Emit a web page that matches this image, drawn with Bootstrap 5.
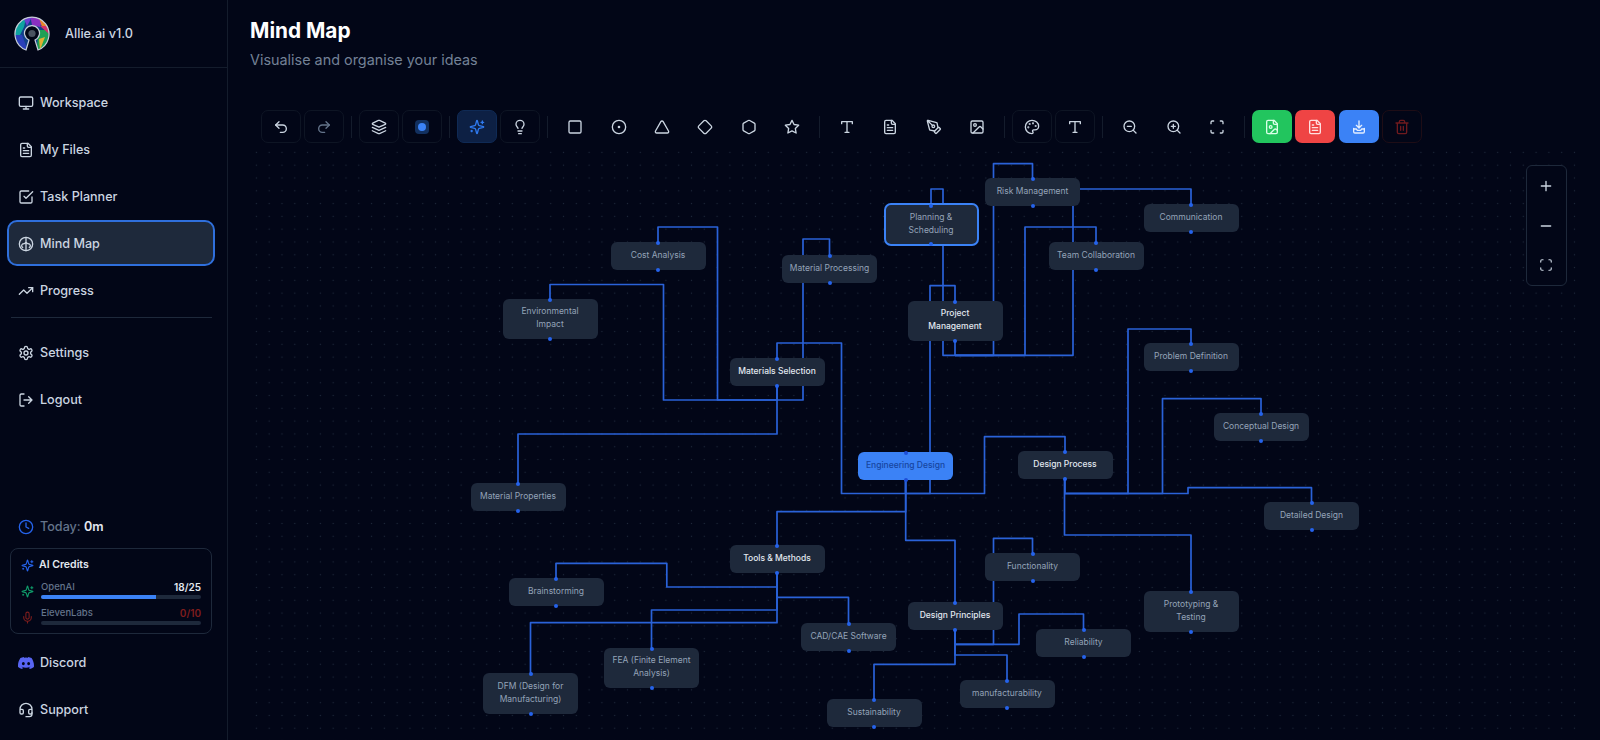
<!DOCTYPE html>
<html lang="en">
<head>
  <meta charset="UTF-8" /><meta name="viewport" content="width=device-width, initial-scale=1" />
  <title>Allie.ai - Mind Map</title>
  <link href="https://cdn.jsdelivr.net/npm/bootstrap@5.3.0/dist/css/bootstrap.min.css" rel="stylesheet" />
  <style>
    html, body { height: 740px; overflow: hidden; }
    body { font-family: Inter, "Liberation Sans", sans-serif; background: #020617; color: #cbd5e1; }
    .ico { width: 16px; height: 16px; fill: none; stroke: currentColor; stroke-width: 2; stroke-linecap: round; stroke-linejoin: round; flex: none; }
    .app-side { width: 228px; height: 740px; border-right: 1px solid #141c2c; flex: none; }
    .brand { height: 68px; padding-left: 14px; gap: 15px; border-bottom: 1px solid #141c2c; font-size: 12.7px; font-weight: 500; }
    .brand svg { width: 36px; height: 38px; }
    .side-nav { padding-top: 11px; gap: 1px; }
    .side-link { height: 46px; width: 208px; margin-left: 7px; padding: 2px 0 0 9px; gap: 6px; font-size: 12.6px; font-weight: 500; color: #cbd5e1; border-radius: 10px; text-decoration: none; border: 2px solid transparent; }
    .side-link.current { background: #1e293b; border-color: #2f6fdc; }
    .side-rule { margin: 4px 15px 11px 11px; border-top: 1px solid #1e293b; opacity: 1; }
    .today { padding-left: 18px; gap: 6px; font-size: 12.6px; font-weight: 500; color: #64748b; margin-bottom: 11px; height: 20px; }
    .today svg { color: #2563eb; }
    .today b { color: #e2e8f0; font-weight: 600; }
    .credit-box { width: 202px; height: 86px; margin-left: 10px; padding: 9px 10px 0 10px; border: 1px solid #1e293b; border-radius: 8px; margin-bottom: 5px; }
    .credit-head { font-size: 10.5px; font-weight: 600; color: #e2e8f0; gap: 5px; margin-bottom: 9px; height: 14px; }
    .credit-head svg { width: 13px; height: 13px; color: #2563eb; }
    .credit-row { gap: 7px; height: 26px; }
    .credit-row > svg { width: 13px; height: 13px; margin-top: 4px; }
    .credit-label { font-size: 9.5px; color: #64748b; font-weight: 500; line-height: 12px; }
    .credit-val { font-size: 10px; color: #e2e8f0; font-weight: 600; line-height: 12px; }
    .credit-bar { height: 4px; margin-top: 2px; background: #1e293b; border-radius: 2px; }
    .credit-bar .progress-bar { background: #3b82f6; }
    .main-pane { min-width: 0; }
    .page-title { padding: 17px 0 0 22px; height: 110px; }
    .page-title h1 { font-size: 20.8px; font-weight: 700; color: #fff; margin: 0 0 4px; line-height: 28px; }
    .page-title p { font-size: 14.4px; color: #738196; margin: 0; line-height: 22px; }
    .tool-row { margin-left: 32.5px; height: 33px; gap: 3.42px; }
    .tool-btn { width: 40px; height: 33px; padding: 0; border-radius: 7px; border: 1px solid transparent; color: #cbd5e1; }
    .tool-btn.edged { border-color: #0e1524; }
    .tool-btn.dim { color: #64748b; }
    .tool-btn.spark { background: #0d2044; border-color: #0f2a55; color: #2f7af0; }
    .tool-btn.go-green { background: #22c55e; color: #d9ffe8; }
    .tool-btn.go-red { background: #ef4444; color: #ffe0e0; }
    .tool-btn.go-blue { background: #3b82f6; color: #e3eeff; }
    .tool-btn.bin { border-color: #1e0d16; color: #6f1a1e; }
    .tool-sep { width: 1px; height: 22px; margin: 0 3.5px; background: #141c2c; flex: none; }
    .dot-chip { width: 14px; height: 14px; border-radius: 4px; background: #12305f; }
    .dot-chip i { width: 8px; height: 8px; border-radius: 50%; background: #3b82f6; }
    .map-canvas { position: relative; margin: 7px 20px 0 22px; height: 590px; overflow: hidden; background-image: radial-gradient(circle, #1e293b 0.8px, transparent 1px); background-size: 12.8px 12.8px; background-position: 0 -4px; }
    .map-lines { position: absolute; inset: 0; width: 100%; height: 100%; }
    .map-lines polyline { fill: none; stroke: #2a62d8; stroke-width: 1.7; stroke-linejoin: round; }
    .map-node { position: absolute; width: 95px; background: #1e293b; border-radius: 6px; color: #94a3b8; font-size: 8.5px; line-height: 13px; text-align: center; padding: 0 2px 2px; }
    .map-node::before, .map-node::after { content: ""; position: absolute; left: 50%; width: 4px; height: 4px; margin-left: -2px; border-radius: 50%; background: #2563eb; }
    .map-node::before { top: -1.5px; }
    .map-node::after { bottom: -1.5px; }
    .map-node.hub { color: #e2e8f0; font-weight: 500; }
    .map-node.root { background: #3b82f6; color: #17459f; font-weight: 500; }
    .map-node.root::before, .map-node.root::after { background: #1d4ed8; }
    .map-node.picked { border: 2px solid #3b82f6; border-radius: 7px; }
    .zoom-panel { position: absolute; left: 1275.500px; top: 15px; width: 41px; height: 121px; padding-top: 12px; gap: 24px; border: 1px solid #1e293b; border-radius: 6px; background: #020617; color: #cbd5e1; }
  </style>
</head>
<body>
  <svg width="0" height="0" class="position-absolute">
    <symbol id="i-monitor" viewBox="0 0 24 24"><rect x="2" y="3" width="20" height="14" rx="2"/><path d="M8 21h8M12 17v4"/></symbol>
    <symbol id="i-file" viewBox="0 0 24 24"><path d="M15 2H6a2 2 0 0 0-2 2v16a2 2 0 0 0 2 2h12a2 2 0 0 0 2-2V7Z"/><path d="M14 2v4a2 2 0 0 0 2 2h4M10 9H8M16 13H8M16 17H8"/></symbol>
    <symbol id="i-check" viewBox="0 0 24 24"><path d="m9 11 3 3L22 4"/><path d="M21 12v7a2 2 0 0 1-2 2H5a2 2 0 0 1-2-2V5a2 2 0 0 1 2-2h11"/></symbol>
    <symbol id="i-brain" viewBox="0 0 24 24"><circle cx="12" cy="12" r="10"/><path d="M12 2v20M12 9c-1 2-3 3-5 3M12 9c1 2 3 3 5 3M7 12c-2 1-2 4 0 5M17 12c2 1 2 4 0 5"/></symbol>
    <symbol id="i-trend" viewBox="0 0 24 24"><path d="M22 7l-8.500 8.500-5-5L2 17"/><path d="M16 7h6v6"/></symbol>
    <symbol id="i-gear" viewBox="0 0 24 24"><path d="M12.220 2h-.44a2 2 0 0 0-2 2v.18a2 2 0 0 1-1 1.730l-.43.25a2 2 0 0 1-2 0l-.15-.08a2 2 0 0 0-2.730.73l-.22.38a2 2 0 0 0 .73 2.730l.15.1a2 2 0 0 1 1 1.720v.51a2 2 0 0 1-1 1.740l-.15.09a2 2 0 0 0-.73 2.730l.22.38a2 2 0 0 0 2.730.73l.15-.08a2 2 0 0 1 2 0l.43.25a2 2 0 0 1 1 1.730V20a2 2 0 0 0 2 2h.44a2 2 0 0 0 2-2v-.18a2 2 0 0 1 1-1.730l.43-.25a2 2 0 0 1 2 0l.15.08a2 2 0 0 0 2.730-.73l.22-.39a2 2 0 0 0-.73-2.730l-.15-.08a2 2 0 0 1-1-1.740v-.5a2 2 0 0 1 1-1.740l.15-.09a2 2 0 0 0 .73-2.730l-.22-.38a2 2 0 0 0-2.730-.73l-.15.08a2 2 0 0 1-2 0l-.43-.25a2 2 0 0 1-1-1.730V4a2 2 0 0 0-2-2z"/><circle cx="12" cy="12" r="3"/></symbol>
    <symbol id="i-logout" viewBox="0 0 24 24"><path d="M9 21H5a2 2 0 0 1-2-2V5a2 2 0 0 1 2-2h4M16 17l5-5-5-5M21 12H9"/></symbol>
    <symbol id="i-clock" viewBox="0 0 24 24"><circle cx="12" cy="12" r="10"/><path d="M12 6v6l4 2"/></symbol>
    <symbol id="i-spark" viewBox="0 0 24 24"><path d="M9.937 15.500A2 2 0 0 0 8.500 14.063l-6.135-1.582a.5.5 0 0 1 0-.962L8.500 9.936A2 2 0 0 0 9.937 8.500l1.582-6.135a.5.5 0 0 1 .963 0L14.063 8.500A2 2 0 0 0 15.500 9.937l6.135 1.581a.5.5 0 0 1 0 .964L15.500 14.063a2 2 0 0 0-1.437 1.437l-1.582 6.135a.5.5 0 0 1-.963 0z"/><path d="M20 3v4M22 5h-4M4 17v2M5 18H3"/></symbol>
    <symbol id="i-mic" viewBox="0 0 24 24"><path d="M12 2a3 3 0 0 0-3 3v7a3 3 0 0 0 6 0V5a3 3 0 0 0-3-3Z"/><path d="M19 10v2a7 7 0 0 1-14 0v-2M12 19v3"/></symbol>
    <symbol id="i-headset" viewBox="0 0 24 24"><path d="M3 11h3a2 2 0 0 1 2 2v3a2 2 0 0 1-2 2H5a2 2 0 0 1-2-2v-5Zm0 0a9 9 0 1 1 18 0m0 0v5a2 2 0 0 1-2 2h-1a2 2 0 0 1-2-2v-3a2 2 0 0 1 2-2h3Z"/><path d="M21 16v2a4 4 0 0 1-4 4h-5"/></symbol>
    <symbol id="i-undo" viewBox="0 0 24 24"><path d="M9 14 4 9l5-5"/><path d="M4 9h10.500a5.500 5.500 0 0 1 0 11H11"/></symbol>
    <symbol id="i-redo" viewBox="0 0 24 24"><path d="m15 14 5-5-5-5"/><path d="M20 9H9.500a5.500 5.500 0 0 0 0 11H13"/></symbol>
    <symbol id="i-layers" viewBox="0 0 24 24"><path d="M12.830 2.180a2 2 0 0 0-1.660 0L2.600 6.080a1 1 0 0 0 0 1.830l8.580 3.910a2 2 0 0 0 1.660 0l8.580-3.900a1 1 0 0 0 0-1.830Z"/><path d="m22 17.650-9.170 4.160a2 2 0 0 1-1.660 0L2 17.650M22 12.650l-9.170 4.160a2 2 0 0 1-1.660 0L2 12.650"/></symbol>
    <symbol id="i-bulb" viewBox="0 0 24 24"><path d="M15 14c.2-1 .7-1.700 1.500-2.500 1-.9 1.500-2.200 1.500-3.500A6 6 0 0 0 6 8c0 1 .2 2.200 1.500 3.500.7.7 1.300 1.500 1.500 2.500"/><path d="M9 18h6M10 22h4"/></symbol>
    <symbol id="i-square" viewBox="0 0 24 24"><rect x="3" y="3" width="18" height="18" rx="2"/></symbol>
    <symbol id="i-circle" viewBox="0 0 24 24"><circle cx="12" cy="12" r="10"/><circle cx="12" cy="12" r="1"/></symbol>
    <symbol id="i-triangle" viewBox="0 0 24 24"><path d="M13.730 4a2 2 0 0 0-3.460 0l-8 14A2 2 0 0 0 4 21h16a2 2 0 0 0 1.730-3Z"/></symbol>
    <symbol id="i-diamond" viewBox="0 0 24 24"><path d="M2.700 10.300a2.410 2.410 0 0 0 0 3.410l7.590 7.590a2.410 2.410 0 0 0 3.410 0l7.590-7.590a2.410 2.410 0 0 0 0-3.410l-7.590-7.590a2.410 2.410 0 0 0-3.410 0Z"/></symbol>
    <symbol id="i-hexagon" viewBox="0 0 24 24"><path d="M21 16V8a2 2 0 0 0-1-1.730l-7-4a2 2 0 0 0-2 0l-7 4A2 2 0 0 0 3 8v8a2 2 0 0 0 1 1.730l7 4a2 2 0 0 0 2 0l7-4A2 2 0 0 0 21 16z"/></symbol>
    <symbol id="i-star" viewBox="0 0 24 24"><path d="M12 2l3.090 6.260L22 9.270l-5 4.870 1.180 6.880L12 17.770l-6.180 3.250L7 14.140 2 9.270l6.910-1.010z"/></symbol>
    <symbol id="i-type" viewBox="0 0 24 24"><path d="M4 7V4h16v3M9 20h6M12 4v16"/></symbol>
    <symbol id="i-pen" viewBox="0 0 24 24"><path d="M15.707 21.293a1 1 0 0 1-1.414 0l-1.586-1.586a1 1 0 0 1 0-1.414l5.586-5.586a1 1 0 0 1 1.414 0l1.586 1.586a1 1 0 0 1 0 1.414z"/><path d="m18 13-1.375-6.874a1 1 0 0 0-.746-.776L3.235 2.028a1 1 0 0 0-1.207 1.207L5.350 15.879a1 1 0 0 0 .776.746L13 18M2.300 2.300l7.286 7.286"/><circle cx="11" cy="11" r="2"/></symbol>
    <symbol id="i-image" viewBox="0 0 24 24"><rect x="3" y="3" width="18" height="18" rx="2"/><circle cx="9" cy="9" r="2"/><path d="m21 15-3.086-3.086a2 2 0 0 0-2.828 0L6 21"/></symbol>
    <symbol id="i-palette" viewBox="0 0 24 24"><path d="M12 2C6.500 2 2 6.500 2 12s4.500 10 10 10c.926 0 1.648-.746 1.648-1.688 0-.437-.18-.835-.437-1.125-.29-.289-.438-.652-.438-1.125a1.640 1.640 0 0 1 1.668-1.668h1.996c3.051 0 5.555-2.503 5.555-5.554C21.965 6.012 17.461 2 12 2z"/><circle cx="13.500" cy="6.500" r=".6"/><circle cx="17.500" cy="10.500" r=".6"/><circle cx="8.500" cy="7.500" r=".6"/><circle cx="6.500" cy="12.500" r=".6"/></symbol>
    <symbol id="i-zoomout" viewBox="0 0 24 24"><circle cx="11" cy="11" r="8"/><path d="m21 21-4.350-4.350M8 11h6"/></symbol>
    <symbol id="i-zoomin" viewBox="0 0 24 24"><circle cx="11" cy="11" r="8"/><path d="m21 21-4.350-4.350M8 11h6M11 8v6"/></symbol>
    <symbol id="i-fit" viewBox="0 0 24 24"><path d="M3 7V5a2 2 0 0 1 2-2h2M17 3h2a2 2 0 0 1 2 2v2M21 17v2a2 2 0 0 1-2 2h-2M7 21H5a2 2 0 0 1-2-2v-2"/></symbol>
    <symbol id="i-fileimg" viewBox="0 0 24 24"><path d="M15 2H6a2 2 0 0 0-2 2v16a2 2 0 0 0 2 2h12a2 2 0 0 0 2-2V7Z"/><path d="M14 2v4a2 2 0 0 0 2 2h4"/><circle cx="10" cy="12" r="2"/><path d="m20 17-1.300-1.300a2.400 2.400 0 0 0-3.400 0L9 22"/></symbol>
    <symbol id="i-save" viewBox="0 0 24 24"><path d="M4 14v5a2 2 0 0 0 2 2h12a2 2 0 0 0 2-2v-5"/><path d="M4 15h4l1.500 2h5l1.500-2h4M12 3v10M8 9.500l4 4 4-4"/></symbol>
    <symbol id="i-trash" viewBox="0 0 24 24"><path d="M3 6h18M19 6v14c0 1-1 2-2 2H7c-1 0-2-1-2-2V6M8 6V4c0-1 1-2 2-2h4c1 0 2 1 2 2v2M10 11v6M14 11v6"/></symbol>
    <symbol id="i-plus" viewBox="0 0 24 24"><path d="M5 12h14M12 5v14"/></symbol>
    <symbol id="i-minus" viewBox="0 0 24 24"><path d="M5 12h14"/></symbol>
  </svg>

  <div class="d-flex">
    <!-- SIDEBAR -->
    <aside class="app-side d-flex flex-column">
      <div class="brand d-flex align-items-center">
        <svg viewBox="0 0 36 38" aria-hidden="true">
          <defs>
            <clipPath id="osi"><path d="M12 35 L15 25 A7.500 7.500 0 1 1 21 25 L24 35 A17 17 0 1 0 12 35 Z"/></clipPath>
          </defs>
          <g clip-path="url(#osi)">
            <rect width="36" height="38" fill="#12408a"/>
            <path d="M16 0h14l-4 12-8-2z" fill="#8a2fc0"/>
            <path d="M24 0h12v14l-8-2z" fill="#e8842a"/>
            <path d="M0 3h12l-2 9-4 8H0z" fill="#0fa3a0"/>
            <path d="M0 20h8l6 16H0z" fill="#2a3fb8"/>
            <path d="M24 15h12v9l-8 12h-5z" fill="#1fa055"/>
            <path d="M26 11h10v9z" fill="#d0306a"/>
            <path d="M9 2h9l-5 9z" fill="#6a3fd0"/>
            <path d="M25 24l6-2-5 13z" fill="#e0b030"/>
          </g>
          <path d="M12 35 L15 25 A7.500 7.500 0 1 1 21 25 L24 35 A17 17 0 1 0 12 35 Z" fill="none" stroke="#c7ced8" stroke-width="1.200"/>
          <circle cx="18" cy="18.500" r="3.600" fill="#4a5360"/>
        </svg>
        <span>Allie.ai v1.0</span>
      </div>

      <nav class="side-nav nav flex-column">
        <a class="side-link d-flex align-items-center" href="#"><svg class="ico"><use href="#i-monitor"/></svg>Workspace</a>
        <a class="side-link d-flex align-items-center" href="#"><svg class="ico"><use href="#i-file"/></svg>My Files</a>
        <a class="side-link d-flex align-items-center" href="#"><svg class="ico"><use href="#i-check"/></svg>Task Planner</a>
        <a class="side-link current d-flex align-items-center" href="#"><svg class="ico"><use href="#i-brain"/></svg>Mind Map</a>
        <a class="side-link d-flex align-items-center" href="#"><svg class="ico"><use href="#i-trend"/></svg>Progress</a>
      </nav>
      <hr class="side-rule" />
      <nav class="nav flex-column side-nav pt-0">
        <a class="side-link d-flex align-items-center" href="#"><svg class="ico"><use href="#i-gear"/></svg>Settings</a>
        <a class="side-link d-flex align-items-center" href="#"><svg class="ico"><use href="#i-logout"/></svg>Logout</a>
      </nav>

      <div class="mt-auto">
        <div class="today d-flex align-items-center"><svg class="ico"><use href="#i-clock"/></svg><span>Today: <b>0m</b></span></div>
        <div class="credit-box">
          <div class="credit-head d-flex align-items-center"><svg class="ico"><use href="#i-spark"/></svg>AI Credits</div>
          <div class="credit-row d-flex">
            <svg class="ico" style="color:#0f9d6b"><use href="#i-spark"/></svg>
            <div class="flex-grow-1">
              <div class="d-flex justify-content-between"><span class="credit-label">OpenAI</span><span class="credit-val">18/25</span></div>
              <div class="progress credit-bar"><div class="progress-bar" style="width:72%"></div></div>
            </div>
          </div>
          <div class="credit-row d-flex">
            <svg class="ico" style="color:#7f1d1d"><use href="#i-mic"/></svg>
            <div class="flex-grow-1">
              <div class="d-flex justify-content-between"><span class="credit-label">ElevenLabs</span><span class="credit-val" style="color:#7f1d1d">0/10</span></div>
              <div class="progress credit-bar"><div class="progress-bar" style="width:0%"></div></div>
            </div>
          </div>
        </div>
        <nav class="nav flex-column side-nav pt-0 pb-2">
          <a class="side-link d-flex align-items-center" href="#"><svg class="ico" style="fill:#5865f2;stroke:none" viewBox="0 0 16 16"><path d="M13.545 2.907a13.227 13.227 0 0 0-3.257-1.011.05.05 0 0 0-.052.025c-.141.25-.297.577-.406.833a12.19 12.19 0 0 0-3.658 0 8.258 8.258 0 0 0-.412-.833.051.051 0 0 0-.052-.025c-1.125.194-2.22.534-3.257 1.011a.041.041 0 0 0-.021.018C.356 6.024-.213 9.047.066 12.032c.001.014.01.028.021.037a13.276 13.276 0 0 0 3.995 2.02.05.05 0 0 0 .056-.019c.308-.42.582-.863.818-1.329a.05.05 0 0 0-.01-.059.051.051 0 0 0-.018-.011 8.875 8.875 0 0 1-1.248-.595.05.05 0 0 1-.02-.066.051.051 0 0 1 .015-.019c.084-.063.168-.129.248-.195a.05.05 0 0 1 .051-.007c2.619 1.196 5.454 1.196 8.041 0a.052.052 0 0 1 .053.007c.08.066.164.132.248.195a.051.051 0 0 1-.004.085 8.254 8.254 0 0 1-1.249.594.05.05 0 0 0-.03.03.052.052 0 0 0 .003.041c.24.465.515.909.817 1.329a.05.05 0 0 0 .056.019 13.235 13.235 0 0 0 4.001-2.02.049.049 0 0 0 .021-.037c.334-3.451-.559-6.449-2.366-9.106a.034.034 0 0 0-.02-.019Zm-8.198 7.307c-.789 0-1.438-.724-1.438-1.612 0-.889.637-1.613 1.438-1.613.807 0 1.45.73 1.438 1.613 0 .888-.637 1.612-1.438 1.612Zm5.316 0c-.788 0-1.438-.724-1.438-1.612 0-.889.637-1.613 1.438-1.613.807 0 1.451.73 1.438 1.613 0 .888-.631 1.612-1.438 1.612Z"/></svg>Discord</a>
          <a class="side-link d-flex align-items-center" href="#"><svg class="ico"><use href="#i-headset"/></svg>Support</a>
        </nav>
      </div>
    </aside>

    <!-- MAIN -->
    <main class="main-pane flex-grow-1">
      <div class="page-title">
        <h1>Mind Map</h1>
        <p>Visualise and organise your ideas</p>
      </div>

      <div class="tool-row d-flex align-items-center" id="toolRow"></div>

      <div class="map-canvas">
        <svg class="map-lines" viewBox="250 150 1330 590" id="mapLines"></svg>
        <div id="mapNodes"></div>
        <div class="zoom-panel d-flex flex-column align-items-center">
          <svg class="ico"><use href="#i-plus"/></svg>
          <svg class="ico"><use href="#i-minus"/></svg>
          <svg class="ico" style="width:14px;height:14px"><use href="#i-fit"/></svg>
        </div>
      </div>
    </main>
  </div>

  <script src="https://cdn.jsdelivr.net/npm/bootstrap@5.3.0/dist/js/bootstrap.bundle.min.js"></script>
  <script>
    // toolbar: [icon, extra classes], null = separator
    const tools = [
      ['undo', 'edged'], ['redo', 'edged dim'], null,
      ['layers', 'edged'], ['DOT', 'edged'], null,
      ['spark', 'spark'], ['bulb', 'edged'], null,
      ['square', ''], ['circle', ''], ['triangle', ''], ['diamond', ''], ['hexagon', ''], ['star', ''], null,
      ['type', ''], ['file', ''], ['pen', ''], ['image', ''], null,
      ['palette', 'edged'], ['type', 'edged'], null,
      ['zoomout', ''], ['zoomin', ''], ['fit', ''], null,
      ['fileimg', 'go-green'], ['file', 'go-red'], ['save', 'go-blue'], ['trash', 'bin']
    ];
    document.getElementById('toolRow').innerHTML = tools.map(t => {
      if (!t) return '<span class="tool-sep"></span>';
      let inner = t[0] === 'DOT'
        ? '<span class="dot-chip d-inline-flex align-items-center justify-content-center"><i></i></span>'
        : `<svg class="ico"><use href="#i-${t[0]}"/></svg>`;
      return `<button class="btn tool-btn d-flex align-items-center justify-content-center ${t[1]}">${inner}</button>`;
    }).join('');

    // nodes: label, centre x, top, height, kind
    const nodes = [
      ['Risk Management', 1032.5, 178, 28], ['Planning &<br>Scheduling', 931, 203, 43, 'picked'],
      ['Communication', 1191, 204, 28], ['Cost Analysis', 658, 242, 28],
      ['Team Collaboration', 1096, 242, 28], ['Material Processing', 829.5, 255, 28],
      ['Environmental<br>Impact', 550, 299, 40], ['Project<br>Management', 955, 301, 40, 'hub'],
      ['Problem Definition', 1191, 343, 28], ['Materials Selection', 777, 358, 28, 'hub'],
      ['Conceptual Design', 1261, 413, 28], ['Engineering Design', 905.5, 452, 28, 'root'],
      ['Design Process', 1065, 451, 28, 'hub'], ['Material Properties', 518, 483, 28],
      ['Detailed Design', 1311.5, 502, 28], ['Tools &amp; Methods', 777, 545, 28, 'hub'],
      ['Functionality', 1032.5, 553, 28], ['Brainstorming', 556, 578, 28],
      ['Prototyping &<br>Testing', 1191, 591, 41], ['Design Principles', 955, 602, 28, 'hub'],
      ['CAD/CAE Software', 848.5, 623, 28], ['Reliability', 1083.5, 629, 28],
      ['FEA (Finite Element<br>Analysis)', 651.5, 648, 40], ['DFM (Design for<br>Manufacturing)', 530.5, 673, 41],
      ['manufacturability', 1007, 680, 28], ['Sustainability', 874, 699, 28]
    ];
    document.getElementById('mapNodes').innerHTML = nodes.map(n =>
      `<div class="map-node d-flex align-items-center justify-content-center ${n[4] || ''}" style="left:${n[1] - 47.5 - 250}px;top:${n[2] - 150}px;height:${n[3]}px"><span>${n[0]}</span></div>`
    ).join('');

    // elbow connectors, page coordinates
    const lines = [
      '658,242 658,227 717.5,227 717.5,400 777,400 777,386',
      '550,299 550,284.500 663.500,284.500 663.500,400 777,400',
      '829.500,255 829.500,239 803,239 803,400 777,400',
      '777,358 777,343 841.500,343 841.500,493.500 905.500,493.500 905.500,479',
      '518,483 518,434 777,434 777,386',
      '955,301 955,285.700 930,285.700 930,493.500 905.500,493.500',
      '931,203 931,189 943,189 943,355.300 955,355.300 955,341',
      '1032.500,178 1032.500,163.700 993.500,163.700 993.500,355.300 955,355.300',
      '1096,242 1096,227 1025,227 1025,355.300 955,355.300',
      '1191,204 1191,189 1073,189 1073,355.300 955,355.300',
      '1065,451 1065,436.700 984.500,436.700 984.500,493.500 905.500,493.500',
      '1191,343 1191,329 1128,329 1128,493.500 1065,493.500 1065,479',
      '1261,413 1261,398.700 1162.500,398.700 1162.500,493.500 1065,493.500',
      '1311.500,502 1311.500,487.700 1188,487.700 1188,493.500 1065,493.500',
      '1191,591 1191,535 1064.500,535 1064.500,479',
      '777,545 777,511.700 905.700,511.700 905.700,479',
      '955,602 955,540.300 905.700,540.300 905.700,479',
      '556,578 556,563.300 666.800,563.300 666.800,587 777,587 777,573',
      '848.500,623 848.500,597.300 777,597.300 777,573',
      '651.500,648 651.500,610 777,610 777,573',
      '530.500,673 530.500,622.700 777,622.700 777,573',
      '1032.500,553 1032.500,538.300 993.500,538.300 993.500,644.300 955,644.300 955,630',
      '1083.500,629 1083.500,614 1019,614 1019,644.300 955,644.300',
      '1007,680 1007,655 955,655 955,630',
      '874,699 874,664.300 955,664.300 955,630'
    ];
    document.getElementById('mapLines').innerHTML = lines.map(p => `<polyline points="${p}"/>`).join('');
  </script>
</body>
</html>
